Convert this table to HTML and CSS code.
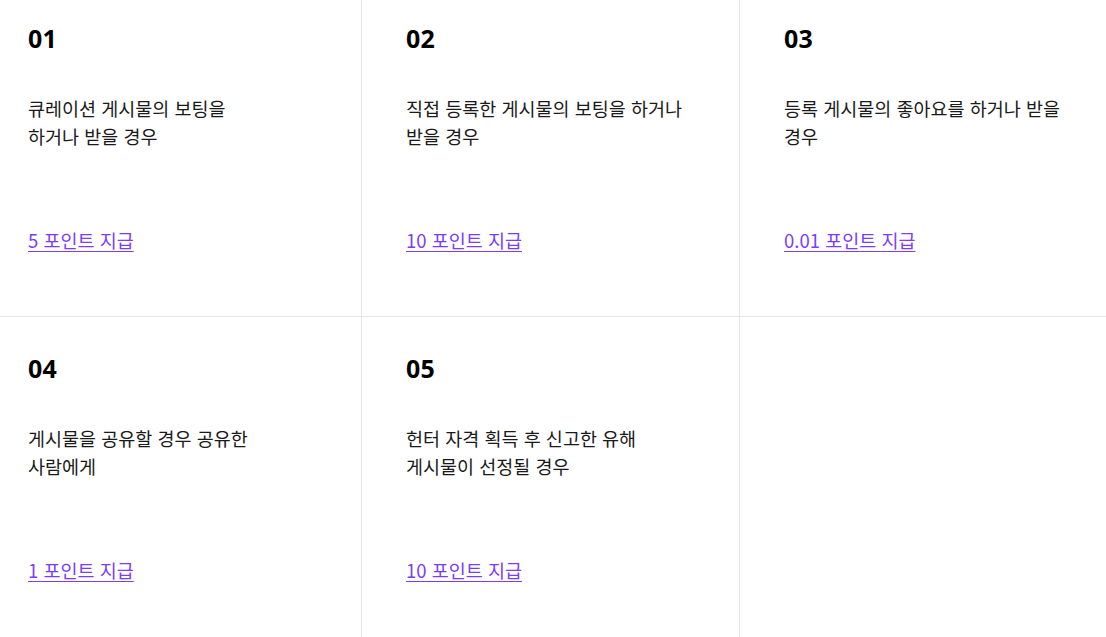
FILE: index.html
```html
<!DOCTYPE html>
<html lang="ko">
<head>
<meta charset="utf-8">
<title>포인트 지급 기준</title>
<link rel="stylesheet" href="styles.css">
</head>
<body>
<div class="grid">
  <div class="cell">
    <div class="num">01</div>
    <p class="desc">큐레이션 게시물의 보팅을<br>하거나 받을 경우</p>
    <a class="point" href="#">5 포인트 지급</a>
  </div>
  <div class="cell">
    <div class="num">02</div>
    <p class="desc">직접 등록한 게시물의 보팅을 하거나<br>받을 경우</p>
    <a class="point" href="#">10 포인트 지급</a>
  </div>
  <div class="cell">
    <div class="num">03</div>
    <p class="desc">등록 게시물의 좋아요를 하거나 받을<br>경우</p>
    <a class="point" href="#">0.01 포인트 지급</a>
  </div>
  <div class="cell">
    <div class="num">04</div>
    <p class="desc">게시물을 공유할 경우 공유한<br>사람에게</p>
    <a class="point" href="#">1 포인트 지급</a>
  </div>
  <div class="cell">
    <div class="num">05</div>
    <p class="desc">헌터 자격 획득 후 신고한 유해<br>게시물이 선정될 경우</p>
    <a class="point" href="#">10 포인트 지급</a>
  </div>
  <div class="cell empty"></div>
</div>
</body>
</html>
```
FILE: styles.css
```css
html, body {
  margin: 0;
  padding: 0;
  background: #fff;
  overflow: hidden;
}
body {
  font-family: "Noto Sans CJK KR", "Noto Sans", sans-serif;
  color: #111;
}
.grid {
  display: grid;
  grid-template-columns: repeat(3, 378px);
  grid-auto-rows: 330px;
  margin: -13px 0 0 -16px;
}
.cell {
  box-sizing: border-box;
  border-right: 1px solid #e6e6e6;
  border-bottom: 1px solid #e6e6e6;
  padding: 35px 0 0 44px;
  display: flex;
  flex-direction: column;
  align-items: flex-start;
}
.cell.empty {
  border-right: none;
}
.num {
  font-family: "Noto Sans", "Open Sans", sans-serif;
  font-weight: 700;
  font-size: 25px;
  line-height: 32px;
  letter-spacing: 0.3px;
  color: #000;
}
.desc {
  margin: 40px 0 0;
  font-size: 18.5px;
  line-height: 28px;
  color: #1a1a1a;
}
.point {
  margin-top: 78px;
  font-size: 18.5px;
  line-height: 24px;
  color: #7a3cff;
  text-decoration: underline;
  text-underline-offset: 3px;
}
```
